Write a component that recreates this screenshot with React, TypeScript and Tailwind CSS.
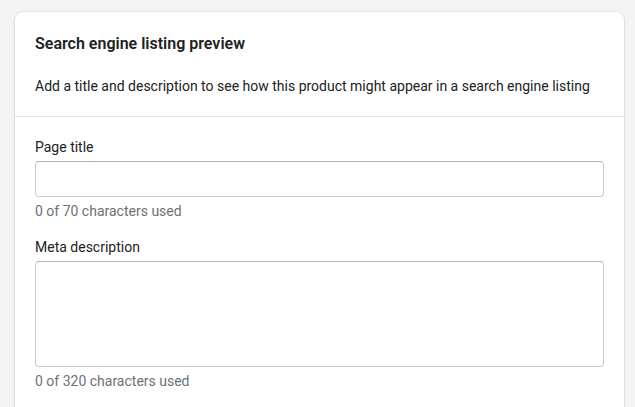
export default function App() {
  return (
    <main
      className="min-h-screen bg-[#f4f4f4] pt-3 pl-[15px] pr-[11px] text-[#202223]"
      style={{ fontFamily: 'Roboto, "Liberation Sans", sans-serif' }}
    >
      <section className="overflow-hidden rounded-lg bg-white shadow-[0_0_0_1px_rgba(63,63,68,0.05),0_1px_3px_0_rgba(63,63,68,0.15)]">
        <div className="border-b border-[#e1e3e5] p-5">
          <h2 className="text-base font-semibold leading-6">
            Search engine listing preview
          </h2>
          <p className="mt-5 text-sm leading-5">
            Add a title and description to see how this product might appear in
            a search engine listing
          </p>
        </div>

        <div className="px-5 pt-5 pb-6">
          <label className="block text-sm leading-5">Page title</label>
          <input
            type="text"
            className="mt-1 block h-9 w-full rounded border border-[#c9cccf] border-t-[#aeb4b9] bg-white px-3 text-sm outline-none"
          />
          <p className="mt-1 text-sm leading-5 text-[#6d7175]">
            0 of 70 characters used
          </p>

          <label className="mt-4 block text-sm leading-5">
            Meta description
          </label>
          <textarea className="mt-1 block h-[106px] w-full resize-none rounded border border-[#c9cccf] border-t-[#aeb4b9] bg-white px-3 py-2 text-sm outline-none" />
          <p className="mt-1 text-sm leading-5 text-[#6d7175]">
            0 of 320 characters used
          </p>
        </div>
      </section>
    </main>
  );
}
